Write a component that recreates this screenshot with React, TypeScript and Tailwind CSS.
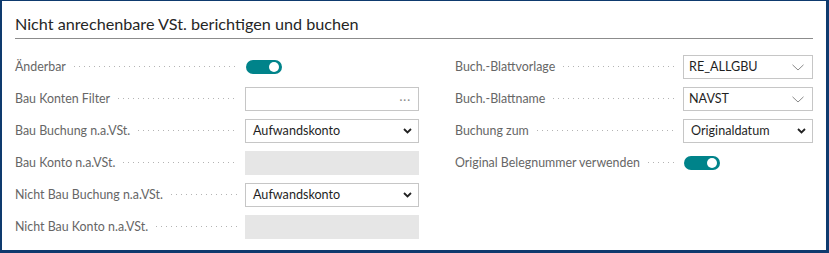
import React from "react";

const font = { fontFamily: 'Lato, "Open Sans", Arial, sans-serif' };

function Leader() {
  return (
    <div className="mx-[8px] h-px flex-1 self-center bg-[linear-gradient(to_right,#b4b4b4_1px,transparent_1px)] bg-[length:5px_1px] bg-repeat-x" />
  );
}

function Label({ text }: { text: string }) {
  return (
    <div className="flex min-w-0 flex-1 items-center">
      <span className="whitespace-nowrap text-[12.4px] text-[#666]">{text}</span>
      <Leader />
    </div>
  );
}

function Toggle() {
  return (
    <div className="flex h-[24px] items-center">
      <div className="ml-[1px] flex h-[14px] w-[36px] items-center justify-end rounded-full bg-[#00838a] pr-[3px]">
        <div className="h-[10px] w-[10px] rounded-full bg-white" />
      </div>
    </div>
  );
}

function SelectChevron() {
  return (
    <svg width="9" height="6" viewBox="0 0 9 6" className="mr-[6px]">
      <path d="M1 1 L4.5 4.5 L8 1" fill="none" stroke="#222" strokeWidth="1.8" />
    </svg>
  );
}

function ThinChevron() {
  return (
    <svg width="12" height="7" viewBox="0 0 12 7" className="mr-[8px]">
      <path d="M0.5 0.8 L6 6 L11.5 0.8" fill="none" stroke="#8a8a8a" strokeWidth="1" />
    </svg>
  );
}

function Input({ children, width, kind }: { children?: React.ReactNode; width: string; kind: "text" | "disabled" }) {
  if (kind === "disabled") {
    return <div className={`${width} h-[24px] bg-[#e6e6e6]`} />;
  }
  return <div className={`${width} flex h-[24px] items-center border border-[#c6c6c6] bg-white`}>{children}</div>;
}

function Row({ label, children }: { label: string; children: React.ReactNode }) {
  return (
    <div className="flex h-[32px] items-center">
      <Label text={label} />
      {children}
    </div>
  );
}

const valueCls = "flex-1 text-[12.6px] text-[#1f1f1f]";

export default function App() {
  return (
    <div
      style={font}
      className="box-border h-[253px] w-[829px] overflow-hidden border-b-[3px] border-l-2 border-r-[3px] border-t-[1px] border-[#0e3a6e] bg-white"
    >
      <div className="pl-[13px] pr-[13px]">
        <div className="pt-[11px] text-[16.2px] leading-[24px] text-[#262626]">Nicht anrechenbare VSt. berichtigen und buchen</div>
        <div className="mt-[2px] h-px bg-[#8c8c8c]" />
        <div className="mt-[12px] flex">
          <div className="flex w-[404px] flex-col">
            <Row label="Änderbar">
              <div className="w-[174px]">
                <Toggle />
              </div>
            </Row>
            <Row label="Bau Konten Filter">
              <Input width="w-[174px]" kind="text">
                <span className="ml-auto mr-[7px] text-[11px] leading-none tracking-[1px] text-[#888]">···</span>
              </Input>
            </Row>
            <Row label="Bau Buchung n.a.VSt.">
              <Input width="w-[174px]" kind="text">
                <span className={`ml-[7px] ${valueCls}`}>Aufwandskonto</span>
                <SelectChevron />
              </Input>
            </Row>
            <Row label="Bau Konto n.a.VSt.">
              <Input width="w-[174px]" kind="disabled" />
            </Row>
            <Row label="Nicht Bau Buchung n.a.VSt.">
              <Input width="w-[174px]" kind="text">
                <span className={`ml-[7px] ${valueCls}`}>Aufwandskonto</span>
                <SelectChevron />
              </Input>
            </Row>
            <Row label="Nicht Bau Konto n.a.VSt.">
              <Input width="w-[174px]" kind="disabled" />
            </Row>
          </div>
          <div className="ml-[36px] flex w-[358px] flex-col">
            <Row label="Buch.-Blattvorlage">
              <Input width="w-[130px]" kind="text">
                <span className={`ml-[5px] ${valueCls}`}>RE_ALLGBU</span>
                <ThinChevron />
              </Input>
            </Row>
            <Row label="Buch.-Blattname">
              <Input width="w-[130px]" kind="text">
                <span className={`ml-[5px] ${valueCls}`}>NAVST</span>
                <ThinChevron />
              </Input>
            </Row>
            <Row label="Buchung zum">
              <Input width="w-[130px]" kind="text">
                <span className={`ml-[7px] ${valueCls}`}>Originaldatum</span>
                <SelectChevron />
              </Input>
            </Row>
            <Row label="Original Belegnummer verwenden">
              <div className="w-[130px]">
                <Toggle />
              </div>
            </Row>
          </div>
        </div>
      </div>
    </div>
  );
}
